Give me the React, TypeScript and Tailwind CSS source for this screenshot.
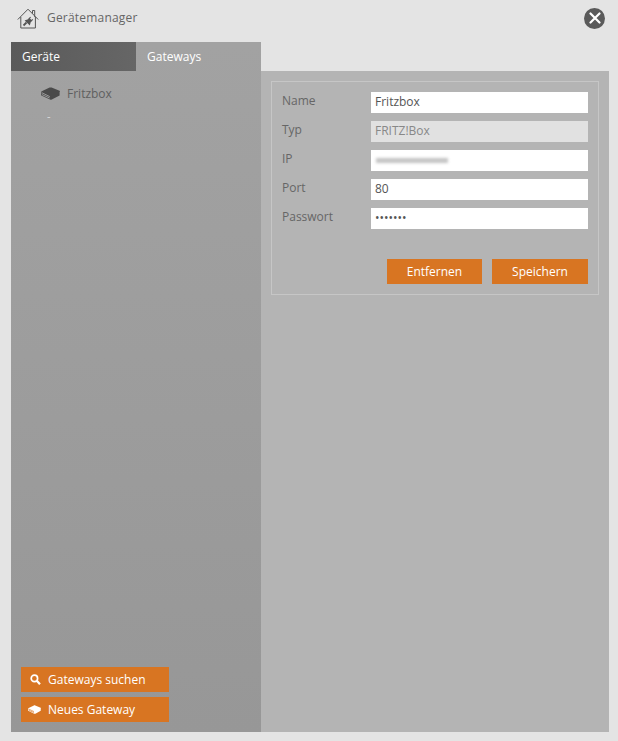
function GatewayIcon({ className, stripe }: { className: string; stripe: string }) {
  return (
    <svg viewBox="0 0 19 13" className={className} fill="currentColor">
      <path d="M.3 4.6 8.6.6c.7-.3 1.4-.3 2 0l7.9 3.2c.6.3.6.8.1 1.2v3.4l-7.8 4.2c-.6.3-1.2.3-1.8 0L.3 8.4c-.4-.3-.4-.8 0-1.1z" />
      <path d="M1 5.8 8.8 9.6M1 7.6l7.6 3.4" stroke={stripe} strokeWidth="0.9" fill="none" />
    </svg>
  );
}

function SearchIcon() {
  return (
    <svg viewBox="0 0 11 11" className="w-[11px] h-[11px] ml-[9px] mr-[7px]" fill="none" stroke="currentColor">
      <circle cx="4.4" cy="4.4" r="3.2" strokeWidth="1.7" />
      <path d="M6.8 6.8l3.2 3.4" strokeWidth="2.2" />
    </svg>
  );
}

function HouseIcon() {
  return (
    <svg viewBox="0 0 22 21" className="w-[22px] h-[21px] text-[#555555]" fill="none" stroke="currentColor" strokeWidth="1">
      <path d="M.8 11.5 11 1.2l10.2 10.3M15.5 5.5V2.5h2.2v6.4M3.8 9v11h14.6V9" />
      <path d="M6.5 17.5 9.5 14.5" strokeWidth="1.8" />
      <path d="M7.6 12.4 12.8 17.4l1-3.4 1.4-1.2-3-3-1.2 1.4z" fill="currentColor" stroke="none" />
      <path d="M12 10.8l1.6-1.8M14 13l1.8-1.6" strokeWidth="1.1" />
    </svg>
  );
}

function Row({ label, value, disabled }: { label: string; value?: string; disabled?: boolean }) {
  return (
    <div className="flex h-[21px]">
      <div className="w-[89px] text-[12px] leading-[17px] text-[#666666]">{label}</div>
      <div className={`w-[217px] h-[21px] pl-1 text-[12px] leading-[20px] ${disabled ? 'bg-[#e1e1e1] text-[#888888]' : 'bg-white text-[#555555]'}`}>
        {value}
      </div>
    </div>
  );
}

export default function App() {
  return (
    <div className="w-[618px] h-[741px] bg-[#e4e4e4] flex flex-col font-['Open_Sans',sans-serif]">
      {/* Header */}
      <div className="h-[42px] flex items-center justify-between pl-[17px] pr-[13px] pb-[6px]">
        <div className="flex items-center gap-[8px]">
          <HouseIcon />
          <span className="text-[12px] text-[#666666] tracking-[0.2px]">Gerätemanager</span>
        </div>
        <div className="w-[21px] h-[21px] rounded-full bg-[#5a5a5a] flex items-center justify-center">
          <svg viewBox="0 0 12 12" className="w-3 h-3" stroke="#ffffff" strokeWidth="2.2" strokeLinecap="round">
            <path d="M1.5 1.5l9 9M10.5 1.5l-9 9" />
          </svg>
        </div>
      </div>

      <div className="flex mx-[11px] h-[690px]">
        {/* Left column */}
        <div className="w-[250px] flex flex-col bg-gradient-to-b from-[#a2a2a2] to-[#979797]">
          <div className="flex h-[29px] text-[12px] font-medium text-white leading-[29px]">
            <div className="w-[125px] pl-[11px] bg-gradient-to-r from-[#5a5a5a] to-[#666666]">Geräte</div>
            <div className="w-[125px] pl-[11px]">Gateways</div>
          </div>
          <div className="flex items-center h-[15px] mt-[15px] pl-[30px] gap-[7px]">
            <GatewayIcon className="w-[19px] h-[13px] text-[#4a4a4a]" stripe="#a2a2a2" />
            <span className="text-[12px] text-[#5f5f5f]">Fritzbox</span>
          </div>
          <div className="pl-[36px] mt-[7px] text-[11px] leading-[15px] text-[#dddddd]">-</div>
          <div className="mt-auto flex flex-col gap-[5px] pl-[10px] pb-[10px]">
            <button className="w-[148px] h-[25px] bg-[#d87522] text-white text-[12px] font-medium flex items-center">
              <SearchIcon />
              Gateways suchen
            </button>
            <button className="w-[148px] h-[25px] bg-[#d87522] text-white text-[12px] font-medium flex items-center">
              <GatewayIcon className="w-[13px] h-[9px] ml-[7px] mr-[7px]" stripe="#d87522" />
              Neues Gateway
            </button>
          </div>
        </div>

        {/* Right panel */}
        <div className="w-[348px] mt-[29px] bg-[#b4b4b4] p-[10px]">
          <div className="h-[214px] border border-[#c6c6c6] pt-[10px] pl-[10px] pr-[10px]">
            <div className="flex flex-col gap-2">
              <Row label="Name" value="Fritzbox" />
              <Row label="Typ" value="FRITZ!Box" disabled />
              <div className="flex h-[21px]">
                <div className="w-[89px] text-[12px] leading-[17px] text-[#666666]">IP</div>
                <div className="w-[217px] h-[21px] bg-white flex items-center overflow-hidden">
                  <div className="w-[72px] h-[5px] ml-[5px] bg-[#c4c4c4] blur-[1.5px]" />
                </div>
              </div>
              <Row label="Port" value="80" />
              <Row label="Passwort" value="•••••••" />
            </div>
            <div className="flex justify-end gap-[10px] mt-[30px]">
              <button className="w-[95px] h-[25px] bg-[#d87522] text-white text-[12px] font-medium">Entfernen</button>
              <button className="w-[96px] h-[25px] bg-[#d87522] text-white text-[12px] font-medium">Speichern</button>
            </div>
          </div>
        </div>
      </div>
    </div>
  );
}
